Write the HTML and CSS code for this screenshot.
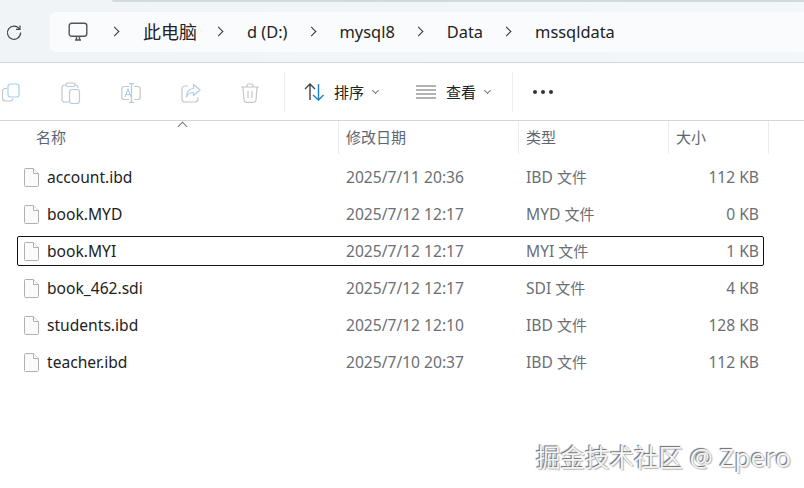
FILE: index.html
```html
<!DOCTYPE html>
<html lang="zh-CN">
  <head>
    <meta charset="UTF-8" />
    <title>mssqldata</title>
    <link rel="stylesheet" href="styles.css">
  </head>
  <body>
    <div class="window">
      <div class="topbar">
        <div class="tab-edge"></div>
        <div class="refresh">
          <svg width="18" height="18" viewBox="0 0 18 18" fill="none" stroke="#444" stroke-width="1.2"><path d="M14.6 6.2A6.6 6.6 0 1 0 15.6 9.5"/><path d="M15 2.4v4h-4"/></svg>
        </div>
        <div class="address">
          <svg class="pc" width="20" height="20" viewBox="0 0 20 20" fill="none" stroke="#555" stroke-width="1.4"><rect x="1.2" y="1.2" width="17.6" height="13" rx="2.4"/><path d="M7 18h6M8.5 14.5V18M11.5 14.5V18"/></svg>
          <span class="chev"></span><span class="crumb cjk">此电脑</span>
          <span class="chev"></span><span class="crumb">d (D:)</span>
          <span class="chev"></span><span class="crumb">mysql8</span>
          <span class="chev"></span><span class="crumb">Data</span>
          <span class="chev"></span><span class="crumb">mssqldata</span>
        </div>
      </div>

      <div class="toolbar">
        <div class="tool-icons">
          <svg width="20" height="20" viewBox="0 0 20 20" fill="none"><rect x="7" y="1" width="11" height="13" rx="2.5" stroke="#a8d0ee" stroke-width="1.2"/><path d="M6 5.500H4A2.500 2.500 0 0 0 1.500 8v7A3 3 0 0 0 4.500 18H9a3 3 0 0 0 3-2.500" stroke="#c6c6c6" stroke-width="1.2"/></svg>
          <svg width="20" height="22" viewBox="0 0 20 22" fill="none"><path d="M5 3H3.500A2.500 2.500 0 0 0 1 5.500v12A2.500 2.500 0 0 0 3.500 20H8M14 3h1a2.500 2.500 0 0 1 2 2v1" stroke="#c6c6c6" stroke-width="1.2"/><rect x="5" y="1" width="9" height="3.500" rx="1.700" stroke="#c6c6c6" stroke-width="1.200"/><rect x="8.500" y="7.500" width="10" height="14" rx="2.500" stroke="#a8d0ee" stroke-width="1.200"/></svg>
          <svg width="20" height="20" viewBox="0 0 20 20" fill="none"><path d="M8 3.500H3A2.500 2.500 0 0 0 .8 6v8A2.500 2.500 0 0 0 3 16.500h5M13 3.500h4A2.500 2.500 0 0 1 19.200 6v8a2.500 2.500 0 0 1-2.200 2.500h-4" stroke="#c6c6c6" stroke-width="1.200"/><path d="M8 .6h5M8 19.400h5M10.500 .6v18.800" stroke="#a8d0ee" stroke-width="1.200"/><path d="M4 14l3-8 3 8M5 11.500h4" stroke="#a8d0ee" stroke-width="1.100"/></svg>
          <svg width="20" height="20" viewBox="0 0 20 20" fill="none"><path d="M7 3H4A3 3 0 0 0 1 6v10a3 3 0 0 0 3 3h10a3 3 0 0 0 3-3v-2" stroke="#c6c6c6" stroke-width="1.200"/><path d="M12.500 1.500L19 7l-6.500 5.500V9.500C9 9.500 6.500 11 5.500 14c0-5 2.500-8.500 7-8.500z" stroke="#a8d0ee" stroke-width="1.200" stroke-linejoin="round"/></svg>
          <svg width="18" height="20" viewBox="0 0 18 20" fill="none" stroke="#c6c6c6" stroke-width="1.200"><path d="M0 4h18M6 4V2.500A1.700 1.700 0 0 1 7.700 1h2.600A1.700 1.700 0 0 1 12 2.500V4M2 4l1 13a2.500 2.500 0 0 0 2.500 2.300h7A2.500 2.500 0 0 0 15 17l1-13M7 8v7M11 8v7"/></svg>
        </div>
        <div class="divider"></div>
        <div class="tool-btn sort">
          <svg width="20" height="18" viewBox="0 0 20 18" fill="none" stroke-width="1.400"><path d="M1 6l5-5 5 5M6 1v16" stroke="#444"/><path d="M9 12l5.500 5 5-5M14.500 1v16" stroke="#1f7fc4"/></svg>
          <span>排序</span>
          <i class="caret"></i>
        </div>
        <div class="tool-btn view">
          <svg width="20" height="14" viewBox="0 0 20 14" fill="none" stroke="#666" stroke-width="1.200"><path d="M0 1h20M0 5h20M0 9h20M0 13h20"/></svg>
          <span>查看</span>
          <i class="caret"></i>
        </div>
        <div class="divider second"></div>
        <div class="more"><b></b><b></b><b></b></div>
      </div>

      <div class="list">
        <div class="head">
          <div class="col-name">名称<i class="sort-arrow"></i></div>
          <div class="col-date">修改日期</div>
          <div class="col-type">类型</div>
          <div class="col-size">大小</div>
        </div>

        <div class="row">
          <div class="name"><svg class="file" viewBox="0 0 15 19"><path d="M.5 1.500a1 1 0 0 1 1-1h8l5 5v12a1 1 0 0 1-1 1h-12a1 1 0 0 1-1-1z"/><path d="M9.500 .5v5h5"/></svg>account.ibd</div>
          <div class="date">2025/7/11 20:36</div>
          <div class="type">IBD <span class="cn">文件</span></div>
          <div class="size">112 KB</div>
        </div>
        <div class="row">
          <div class="name"><svg class="file" viewBox="0 0 15 19"><path d="M.5 1.500a1 1 0 0 1 1-1h8l5 5v12a1 1 0 0 1-1 1h-12a1 1 0 0 1-1-1z"/><path d="M9.500 .5v5h5"/></svg>book.MYD</div>
          <div class="date">2025/7/12 12:17</div>
          <div class="type">MYD <span class="cn">文件</span></div>
          <div class="size">0 KB</div>
        </div>
        <div class="row focused">
          <div class="name"><svg class="file" viewBox="0 0 15 19"><path d="M.5 1.500a1 1 0 0 1 1-1h8l5 5v12a1 1 0 0 1-1 1h-12a1 1 0 0 1-1-1z"/><path d="M9.500 .5v5h5"/></svg>book.MYI</div>
          <div class="date">2025/7/12 12:17</div>
          <div class="type">MYI <span class="cn">文件</span></div>
          <div class="size">1 KB</div>
        </div>
        <div class="row">
          <div class="name"><svg class="file" viewBox="0 0 15 19"><path d="M.5 1.500a1 1 0 0 1 1-1h8l5 5v12a1 1 0 0 1-1 1h-12a1 1 0 0 1-1-1z"/><path d="M9.500 .5v5h5"/></svg>book_462.sdi</div>
          <div class="date">2025/7/12 12:17</div>
          <div class="type">SDI <span class="cn">文件</span></div>
          <div class="size">4 KB</div>
        </div>
        <div class="row">
          <div class="name"><svg class="file" viewBox="0 0 15 19"><path d="M.5 1.500a1 1 0 0 1 1-1h8l5 5v12a1 1 0 0 1-1 1h-12a1 1 0 0 1-1-1z"/><path d="M9.500 .5v5h5"/></svg>students.ibd</div>
          <div class="date">2025/7/12 12:10</div>
          <div class="type">IBD <span class="cn">文件</span></div>
          <div class="size">128 KB</div>
        </div>
        <div class="row">
          <div class="name"><svg class="file" viewBox="0 0 15 19"><path d="M.5 1.500a1 1 0 0 1 1-1h8l5 5v12a1 1 0 0 1-1 1h-12a1 1 0 0 1-1-1z"/><path d="M9.500 .5v5h5"/></svg>teacher.ibd</div>
          <div class="date">2025/7/10 20:37</div>
          <div class="type">IBD <span class="cn">文件</span></div>
          <div class="size">112 KB</div>
        </div>
      </div>

      <div class="watermark">掘金技术社区 <span class="wm-latin">@ Zpero</span></div>
    </div>
  </body>
</html>
```

FILE: styles.css
```css
* {
  margin: 0;
  padding: 0;
  box-sizing: border-box;
  font-family: "Noto Sans", "Noto Sans CJK SC", sans-serif;
}
body {
  background: #fff;
  overflow: hidden;
}
.window {
  position: relative;
  width: 804px;
  height: 488px;
  background: #fff;
}

/* address bar */
.topbar {
  position: relative;
  height: 63px;
  display: flex;
  align-items: center;
  background: linear-gradient(90deg, #f1f4f7, #f3f7f9);
  border-bottom: 1px solid #d3d6d8;
  padding-top: 1px;
}
.tab-edge {
  position: absolute;
  top: 0;
  left: 112px;
  right: 0;
  height: 2px;
  background: #cfdcdc;
  border-bottom-left-radius: 3px;
}
.refresh {
  width: 50px;
  padding-left: 5px;
  display: flex;
}
.address {
  flex: 1;
  height: 40px;
  display: flex;
  align-items: center;
  padding-left: 18px;
  background: #f9fbfd;
  border-radius: 6px 0 0 6px;
  font-size: 16.4px;
  line-height: 22px;
  color: #222;
}
.pc {
  margin-right: 23px;
}
.chev {
  width: 7px;
  height: 7px;
  margin-right: 25px;
  border-top: 1.3px solid #333;
  border-right: 1.3px solid #333;
  transform: rotate(45deg);
}
.crumb {
  margin-right: 20px;
}
.crumb.cjk {
  font-size: 18px;
  margin-right: 18px;
}

/* command bar */
.toolbar {
  height: 58px;
  display: flex;
  align-items: center;
  border-bottom: 1px solid #d3d6d8;
}
.tool-icons {
  width: 284px;
  display: flex;
  align-items: center;
  gap: 40px;
  padding: 2px 0 0 1px;
}
.divider {
  width: 1px;
  height: 40px;
  background: #eceef0;
}
.divider.second {
  margin-left: 22px;
}
.tool-btn {
  display: flex;
  align-items: center;
  font-size: 15px;
  line-height: 20px;
  color: #222;
}
.sort {
  margin-left: 19px;
}
.sort span {
  margin-left: 10px;
}
.view {
  margin-left: 38px;
}
.view span {
  margin-left: 10px;
}
.caret {
  width: 5px;
  height: 5px;
  margin: -3px 0 0 9px;
  border-right: 1px solid #777;
  border-bottom: 1px solid #777;
  transform: rotate(45deg);
}
.more {
  display: flex;
  gap: 4px;
  margin-left: 20px;
}
.more b {
  width: 4px;
  height: 4px;
  border-radius: 50%;
  background: #333;
}

/* file list */
.list {
  padding-left: 17px;
  width: 764px;
  box-sizing: content-box;
}
.head {
  position: relative;
  display: flex;
  height: 33px;
  font-size: 15px;
  color: #5d6673;
  margin-bottom: 8px;
}
.head > div {
  height: 33px;
  line-height: 32px;
  padding-left: 7px;
  border-right: 1px solid #e9ebee;
}
.head .col-name {
  width: 322px;
  padding-left: 19px;
}
.head .col-date {
  width: 180px;
}
.head .col-type {
  width: 150px;
}
.head .col-size {
  width: 100px;
}
.sort-arrow {
  position: absolute;
  left: 162px;
  top: 2px;
  width: 7px;
  height: 7px;
  border-left: 1px solid #777;
  border-top: 1px solid #777;
  transform: rotate(45deg);
}
.row {
  width: 747px;
  height: 30px;
  margin-bottom: 7px;
  display: flex;
  align-items: center;
  font-size: 15.6px;
  line-height: 20px;
  color: #6a6f76;
  border: 1px solid transparent;
}
.row.focused {
  border-color: #111;
  border-radius: 2px;
}
.name {
  width: 321px;
  display: flex;
  align-items: center;
  padding-left: 6px;
  color: #222;
}
.file {
  width: 15px;
  height: 19px;
  margin-right: 8px;
  fill: #fbfbfb;
  stroke: #b0b0b0;
  stroke-width: 1;
}
.date {
  width: 180px;
  padding-left: 7px;
}
.type {
  width: 150px;
  padding-left: 7px;
}
.cn {
  font-size: 15px;
  line-height: 1;
}
.size {
  width: 90px;
  text-align: right;
}

.watermark {
  position: absolute;
  right: 13px;
  top: 439px;
  font-size: 24.5px;
  line-height: 36px;
  color: #f4f4f4;
  white-space: nowrap;
  text-shadow: -1px -1px 1px #6a6a6a, 1px 1px 1px #b4b4b4;
}
.wm-latin {
  font-size: 26px;
}
```
